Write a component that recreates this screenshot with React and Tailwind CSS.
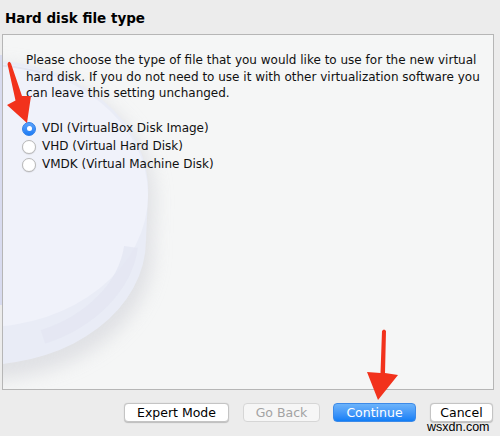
import React, { useState } from 'react'

const options = [
  { id: 'vdi', label: 'VDI (VirtualBox Disk Image)' },
  { id: 'vhd', label: 'VHD (Virtual Hard Disk)' },
  { id: 'vmdk', label: 'VMDK (Virtual Machine Disk)' },
]

function Radio({ checked }) {
  return checked ? (
    <span className="w-[14px] h-[14px] rounded-full bg-gradient-to-b from-[#5aa2fb] to-[#1a7cf5] border border-[#2f7fe6] flex items-center justify-center shrink-0">
      <span className="w-[5px] h-[5px] rounded-full bg-white" />
    </span>
  ) : (
    <span className="w-[14px] h-[14px] rounded-full bg-white border border-[#b9b9b9] shadow-[0_0.5px_1px_rgba(0,0,0,0.15)] shrink-0" />
  )
}

function DiskArt() {
  // faded hard disk drawing behind the wizard page
  return (
    <svg className="absolute left-0 top-0" width="260" height="355" viewBox="0 0 260 355">
      <defs>
        <filter id="blur" x="-50%" y="-50%" width="200%" height="200%">
          <feGaussianBlur stdDeviation="9" />
        </filter>
      </defs>
      <path
        d="M-20 30 A170 135 0 0 1 152 165 L150 212 A170 128 0 0 1 -20 345 Z"
        fill="#d9dadf"
        opacity="0.75"
        filter="url(#blur)"
      />
      <path d="M-20 25 A165 130 0 0 1 145 160 L143 205 A165 125 0 0 1 -20 330 Z" fill="#e9ecf6" />
      <ellipse cx="-20" cy="160" rx="165" ry="132" fill="#f0f2fa" />
      <path d="M-20 30 A163 128 0 0 1 40 38" stroke="#e2e5f1" strokeWidth="2" fill="none" />
      <path d="M128 212 A150 112 0 0 1 40 302" stroke="#e3e6f2" strokeWidth="14" fill="none" opacity="0.8" />
    </svg>
  )
}

function Arrow({ d }) {
  return <path d={d} fill="#f2321c" />
}

export default function App() {
  const [choice, setChoice] = useState('vdi')

  return (
    <div
      className="relative w-[500px] h-[436px] bg-[#ececec] overflow-hidden text-[#1b1b1b]"
      style={{ fontFamily: '"Lucida Grande", "DejaVu Sans", sans-serif' }}
    >
      <div className="absolute left-0 top-[55px] w-[3px] h-[250px] bg-[#d8dbef]" />

      <div className="pl-[5px] pt-[8px] h-[34px] text-[13.5px] font-bold text-black">
        Hard disk file type
      </div>

      <div className="relative ml-[2px] w-[492px] h-[356px] bg-[#f5f6f6] border border-[#b6b6b6] overflow-hidden">
        <DiskArt />
        <div className="relative pl-[23px] pt-[17px] text-[12px] leading-[16.5px] text-[#111]">
          <p>
            Please choose the type of file that you would like to use for the new virtual
            <br />
            hard disk. If you do not need to use it with other virtualization software you
            <br />
            can leave this setting unchanged.
          </p>
          <div className="mt-[20px] flex flex-col gap-[4px] -ml-[4px]">
            {options.map((o) => (
              <label key={o.id} className="flex items-center gap-[6px] h-[14px]" onClick={() => setChoice(o.id)}>
                <Radio checked={choice === o.id} />
                <span>{o.label}</span>
              </label>
            ))}
          </div>
        </div>
      </div>

      <div className="flex items-center mt-[13px] pl-[124px] gap-[14px] text-[12.5px]">
        <button className="w-[105px] h-[19px] rounded-[4px] bg-white border border-[#c4c4c4] shadow-[0_0.5px_1px_rgba(0,0,0,0.2)] text-black">
          Expert Mode
        </button>
        <button className="w-[77px] h-[19px] rounded-[4px] bg-[#f6f6f6] border border-[#d6d6d6] text-[#a3a3a3]">
          Go Back
        </button>
        <button className="ml-[-1px] w-[83px] h-[19px] rounded-[4px] bg-gradient-to-b from-[#6cb3fa] to-[#0f7ef6] border border-[#3d8ae8] text-white">
          Continue
        </button>
        <button className="w-[63px] h-[19px] rounded-[4px] bg-white border border-[#c4c4c4] shadow-[0_0.5px_1px_rgba(0,0,0,0.2)] text-black">
          Cancel
        </button>
      </div>

      <span
        className="absolute left-[427px] top-[421px] text-[12.5px] text-black leading-none"
        style={{ fontFamily: '"Liberation Sans", Arial, sans-serif' }}
      >
        wsxdn.com
      </span>

      <svg className="absolute left-0 top-0 pointer-events-none" width="500" height="436">
        <Arrow d="M7.5 64 Q9 60 11 63.5 L22 96 L31 96 L27 123 L7 105 L15.5 100.5 Z" />
        <Arrow d="M382 331 Q384 328 386 331 L385 373 L398 375 L378 400 L367 372 L380.5 373 Z" />
      </svg>
    </div>
  )
}
